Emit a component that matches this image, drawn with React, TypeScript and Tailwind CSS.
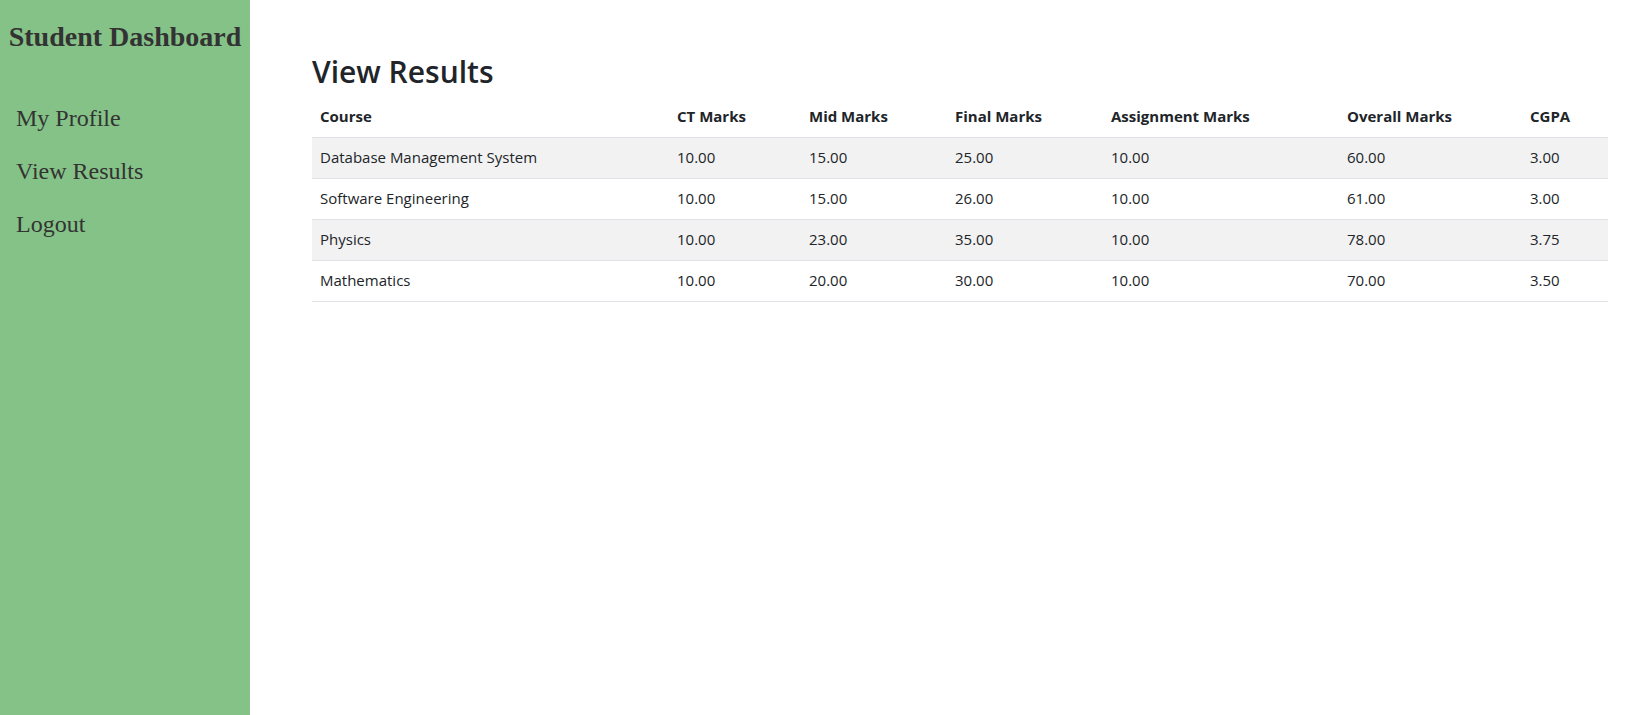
import React from "react";

const rows = [
  ["Database Management System", "10.00", "15.00", "25.00", "10.00", "60.00", "3.00"],
  ["Software Engineering", "10.00", "15.00", "26.00", "10.00", "61.00", "3.00"],
  ["Physics", "10.00", "23.00", "35.00", "10.00", "78.00", "3.75"],
  ["Mathematics", "10.00", "20.00", "30.00", "10.00", "70.00", "3.50"],
];

const headers = ["Course", "CT Marks", "Mid Marks", "Final Marks", "Assignment Marks", "Overall Marks", "CGPA"];
const widths = ["w-[357px]", "w-[132px]", "w-[146px]", "w-[156px]", "w-[236px]", "w-[183px]", "w-[86px]"];

export default function App() {
  return (
    <div className="flex min-h-[715px] w-full bg-white">
      <aside className="w-[250px] shrink-0 bg-[#85c287] text-[#333333] font-['Liberation_Serif',serif]">
        <h2 className="pt-[20px] text-center text-[28px] font-bold leading-[34px]">Student Dashboard</h2>
        <nav className="mt-[48px] flex flex-col gap-[21px] pl-[16px]">
          <a className="text-[24px] leading-[32px]">My Profile</a>
          <a className="text-[24px] leading-[32px]">View Results</a>
          <a className="text-[24px] leading-[32px]">Logout</a>
        </nav>
      </aside>
      <main className="flex-1 pl-[62px] pr-[39px] pt-[53px] text-[#212529] font-['Open_Sans',sans-serif]">
        <h2 className="mb-[5px] text-[30px] font-semibold leading-[38px]">View Results</h2>
        <table className="w-full border-collapse table-fixed text-[15px]">
          <thead>
            <tr className="border-b border-[#dee2e6]">
              {headers.map((h, i) => (
                <th key={h} className={`${widths[i]} h-[41px] px-2 text-left font-bold`}>{h}</th>
              ))}
            </tr>
          </thead>
          <tbody>
            {rows.map((r, ri) => (
              <tr key={ri} className={`border-b border-[#dee2e6] ${ri % 2 === 0 ? "bg-[#f2f2f2]" : "bg-white"}`}>
                {r.map((c, ci) => (
                  <td key={ci} className="h-[41px] px-2 text-left">{c}</td>
                ))}
              </tr>
            ))}
          </tbody>
        </table>
      </main>
    </div>
  );
}
